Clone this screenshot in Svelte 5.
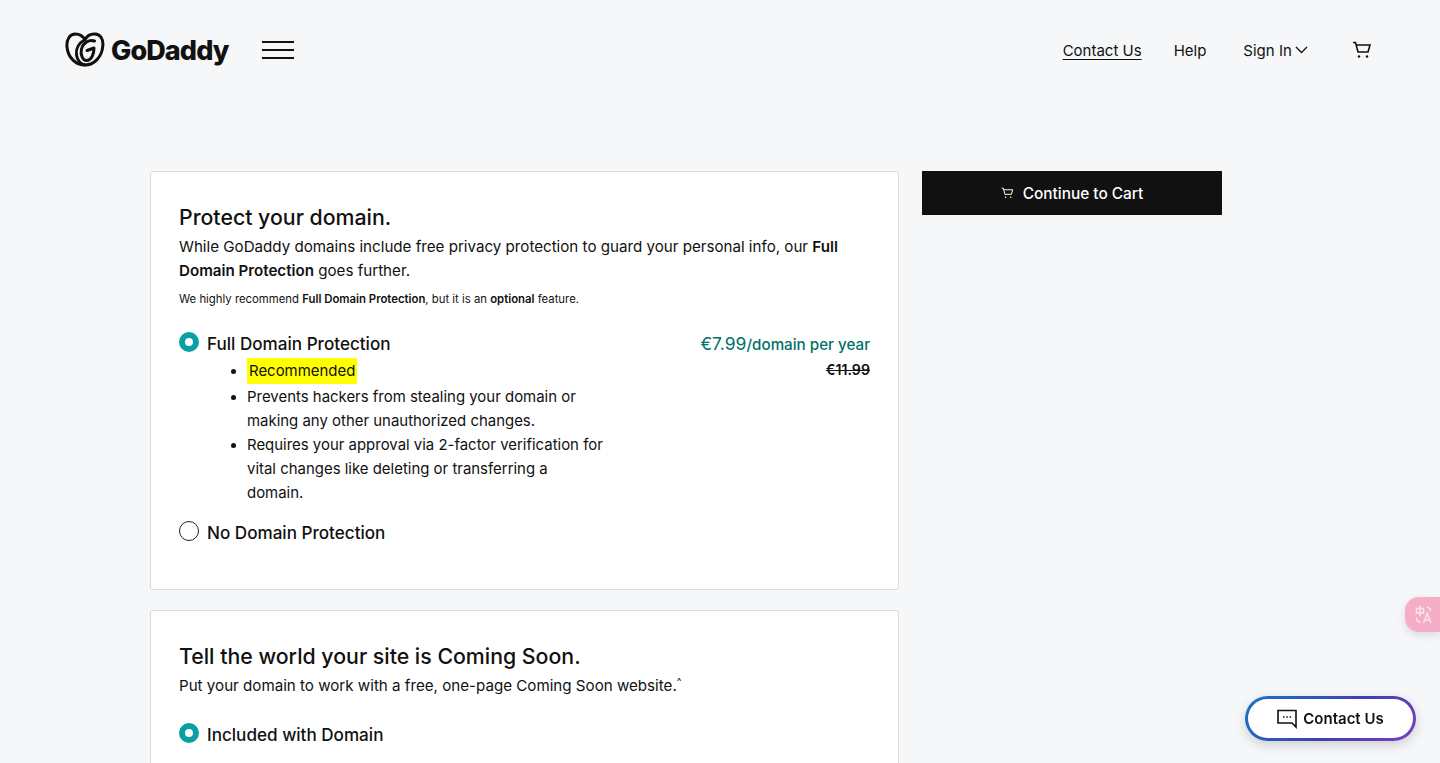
<script>
    const bullets = [
        ['Prevents hackers from stealing your domain or', 'making any other unauthorized changes.'],
        ['Requires your approval via 2-factor verification for', 'vital changes like deleting or transferring a', 'domain.']
    ];
</script>

<div class="page">
    <header class="topbar">
        <div class="brand">
            <svg class="logo-mark" width="40" height="36" viewBox="0 0 40 36" fill="none" stroke="#111" stroke-width="3" stroke-linecap="round" stroke-linejoin="round">
                <path d="M20 33C11 33 3 26 2 15 1.300 7 5 2 10.500 2c4 0 7.500 2.500 9.500 5.500C22 4 26 1.700 30 2c5.500.3 8.500 5 7.800 12C37 25 29 33 20 33Z"/>
                <path d="M20 7.500C14 11 10.500 17 11.500 23c.8 5 4 9 8.500 10"/>
                <path d="M29.500 9C24 7 18 11 16.500 17c-1.500 6 1.500 12 5.500 11.500 4.500-.5 7-6.500 7-12.500l-7 2.500"/>
            </svg>
            <span class="wordmark">GoDaddy</span>
            <button class="burger" aria-label="Menu"><i></i><i></i><i></i></button>
        </div>
        <nav class="nav">
            <a href="#contact" class="underlined">Contact Us</a>
            <a href="#help">Help</a>
            <a href="#signin" class="signin">Sign In
                <svg width="13" height="8" viewBox="0 0 13 8" fill="none" stroke="#111" stroke-width="1.300"><path d="M1 1l5.500 5.500L12 1"/></svg>
            </a>
            <svg class="cart" width="20" height="18" viewBox="0 0 20 18" fill="none" stroke="#111" stroke-width="1.600">
                <path d="M1 1.500h2.500L6 11h10l2-7H4.500"/>
                <circle cx="7" cy="15.500" r="1.200" fill="#111" stroke="none"/>
                <circle cx="15" cy="15.500" r="1.200" fill="#111" stroke="none"/>
            </svg>
        </nav>
    </header>

    <main class="content">
        <div class="cards">
            <section class="card first">
                <h2>Protect your domain.</h2>
                <p class="lead">While GoDaddy domains include free privacy protection to guard your personal info, our <b>Full Domain Protection</b> goes further.</p>
                <p class="note">We highly recommend <b>Full Domain Protection</b>, but it is an <b>optional</b> feature.</p>

                <div class="option selected-row">
                    <div class="option-main">
                        <div class="option-label"><span class="radio on"></span>Full Domain Protection</div>
                        <ul>
                            <li class="rec"><mark>Recommended</mark></li>
                            {#each bullets as lines}
                                <li>{#each lines as line}<span class="line">{line}</span>{/each}</li>
                            {/each}
                        </ul>
                    </div>
                    <div class="price">
                        <div class="now"><span class="amount">€7.99</span>/domain per year</div>
                        <s>€11.99</s>
                    </div>
                </div>

                <div class="option-label none"><span class="radio"></span>No Domain Protection</div>
            </section>

            <section class="card second">
                <h2>Tell the world your site is Coming Soon.</h2>
                <p class="lead">Put your domain to work with a free, one-page Coming Soon website.<sup>^</sup></p>
                <div class="option-label included"><span class="radio on"></span>Included with Domain</div>
            </section>
        </div>

        <aside class="side">
            <button class="continue">
                <svg width="13" height="12" viewBox="0 0 20 18" fill="none" stroke="#fff" stroke-width="1.500">
                    <path d="M1 1.500h2.500L6 11h10l2-7H4.500"/>
                    <circle cx="7" cy="15.500" r="1.200" fill="#fff" stroke="none"/>
                    <circle cx="15" cy="15.500" r="1.200" fill="#fff" stroke="none"/>
                </svg>
                Continue to Cart
            </button>
        </aside>
    </main>

    <div class="translate">
        <svg width="18" height="19" viewBox="0 0 18 19" fill="none" stroke="#fde4ec" stroke-width="1.500">
            <path d="M5 1v10M1.500 3.500h7v4.500h-7zM1.500 13c0 2.500 1.500 4 4 4M12 2c2 .5 3.500 2 3.500 4"/>
            <path d="M8.500 18l3.700-9.500 3.800 9.500M10 15h4.500"/>
        </svg>
    </div>

    <button class="chat">
        <svg width="20" height="20" viewBox="0 0 20 20" fill="none" stroke="#111" stroke-width="1.600">
            <path d="M1 1.500h18v16.500l-4-4H1z"/>
            <path d="M6 8h1.500M9.300 8h1.500M12.600 8h1.500" stroke-width="1.400"/>
        </svg>
        Contact Us
    </button>
</div>

<style>
    :global(body) {
        margin: 0;
        background: #f5f7f8;
        overflow: hidden;
    }

    .page {
        height: 763px;
        overflow: hidden;
        font-family: Inter, "Noto Sans", sans-serif;
        color: #111;
    }

    .topbar {
        display: flex;
        justify-content: space-between;
        align-items: center;
        height: 100px;
        padding: 0 68px 0 65px;
    }

    .brand {
        display: flex;
        align-items: center;
    }

    .wordmark {
        font-family: Inter, sans-serif;
        font-weight: 800;
        font-size: 27px;
        letter-spacing: -0.900px;
        margin-left: 6px;
    }

    .burger {
        display: flex;
        flex-direction: column;
        gap: 6px;
        width: 32px;
        margin-left: 33px;
        padding: 0;
        border: none;
        background: none;
    }

    .burger i {
        display: block;
        height: 2px;
        background: #111;
    }

    .nav {
        display: flex;
        align-items: center;
        font-size: 15px;
    }

    .nav a {
        color: #111;
        text-decoration: none;
        margin-right: 32px;
    }

    .nav a.underlined {
        text-decoration: underline;
        text-underline-offset: 3px;
    }

    .nav a.signin {
        margin-right: 44px;
        margin-left: 5px;
    }

    .signin svg {
        margin-left: -1px;
        vertical-align: 2px;
    }

    .content {
        display: flex;
        align-items: flex-start;
        gap: 23px;
        padding: 71px 0 0 150px;
    }

    .cards {
        display: flex;
        flex-direction: column;
        gap: 20px;
        width: 749px;
    }

    .card {
        box-sizing: border-box;
        background: #fff;
        border: 1px solid #d9dcdd;
        border-radius: 3px;
        padding: 31px 28px 0;
    }

    .card.first {
        height: 419px;
    }

    .card.second {
        height: 220px;
    }

    h2 {
        margin: 0;
        font-size: 21.300px;
        line-height: 28px;
        font-weight: 500;
    }

    .lead {
        margin: 4px 0 0;
        font-size: 15.150px;
        line-height: 24px;
        width: 680px;
    }

    b {
        font-weight: 600;
    }

    .note {
        margin: 7px 0 0;
        font-size: 11.350px;
        line-height: 18px;
    }

    .option {
        display: flex;
        justify-content: space-between;
        margin-top: 24px;
    }

    .option-label {
        display: flex;
        align-items: center;
        font-size: 17.100px;
        line-height: 24px;
        font-weight: 500;
    }

    .radio {
        box-sizing: border-box;
        width: 20px;
        height: 20px;
        margin: -4px 8px 0 0;
        border: 1.500px solid #222;
        border-radius: 50%;
        background: #fff;
    }

    .radio.on {
        border: 6px solid #09a0a3;
    }

    ul {
        margin: 3px 0 0;
        padding: 0 0 0 68px;
        font-size: 14.950px;
        line-height: 24px;
        width: 370px;
    }

    li.rec {
        margin-bottom: 2px;
    }

    .line {
        display: block;
        white-space: nowrap;
    }

    mark {
        background: #ffff00;
        color: #111;
        padding: 4px 2px;
    }

    .price {
        text-align: right;
        font-size: 15.200px;
        line-height: 24px;
        font-weight: 500;
        color: #00706a;
    }

    .price .amount {
        font-size: 17.500px;
        font-weight: 400;
    }

    .price s {
        display: block;
        color: #111;
        font-size: 14.200px;
        font-weight: 600;
        margin-top: 1px;
    }

    .none {
        margin-top: 16px;
    }

    .included {
        margin-top: 25px;
    }

    sup {
        font-size: 10px;
        line-height: 0;
    }

    .continue {
        display: flex;
        justify-content: center;
        align-items: center;
        gap: 9px;
        width: 300px;
        height: 44px;
        border: none;
        background: #111;
        color: #fff;
        font-family: inherit;
        font-size: 15.400px;
        font-weight: 500;
    }

    .translate {
        position: fixed;
        right: 0;
        top: 597px;
        display: flex;
        align-items: center;
        padding-left: 10px;
        width: 25px;
        height: 35px;
        background: #f6aec8;
        border-radius: 14px 0 0 14px;
        box-shadow: 0 3px 8px rgba(0, 0, 0, 0.12);
    }

    .chat {
        position: fixed;
        left: 1245px;
        top: 696px;
        display: flex;
        justify-content: center;
        align-items: center;
        gap: 6px;
        box-sizing: border-box;
        width: 171px;
        height: 45px;
        border: 3px solid transparent;
        border-radius: 23px;
        background: linear-gradient(#fff, #fff) padding-box, linear-gradient(135deg, #1976c8, #3f3fb5 55%, #7a3fc0) border-box;
        color: #111;
        font-family: inherit;
        font-size: 15px;
        font-weight: 600;
        box-shadow: 0 4px 12px rgba(0, 0, 0, 0.16);
    }
</style>
